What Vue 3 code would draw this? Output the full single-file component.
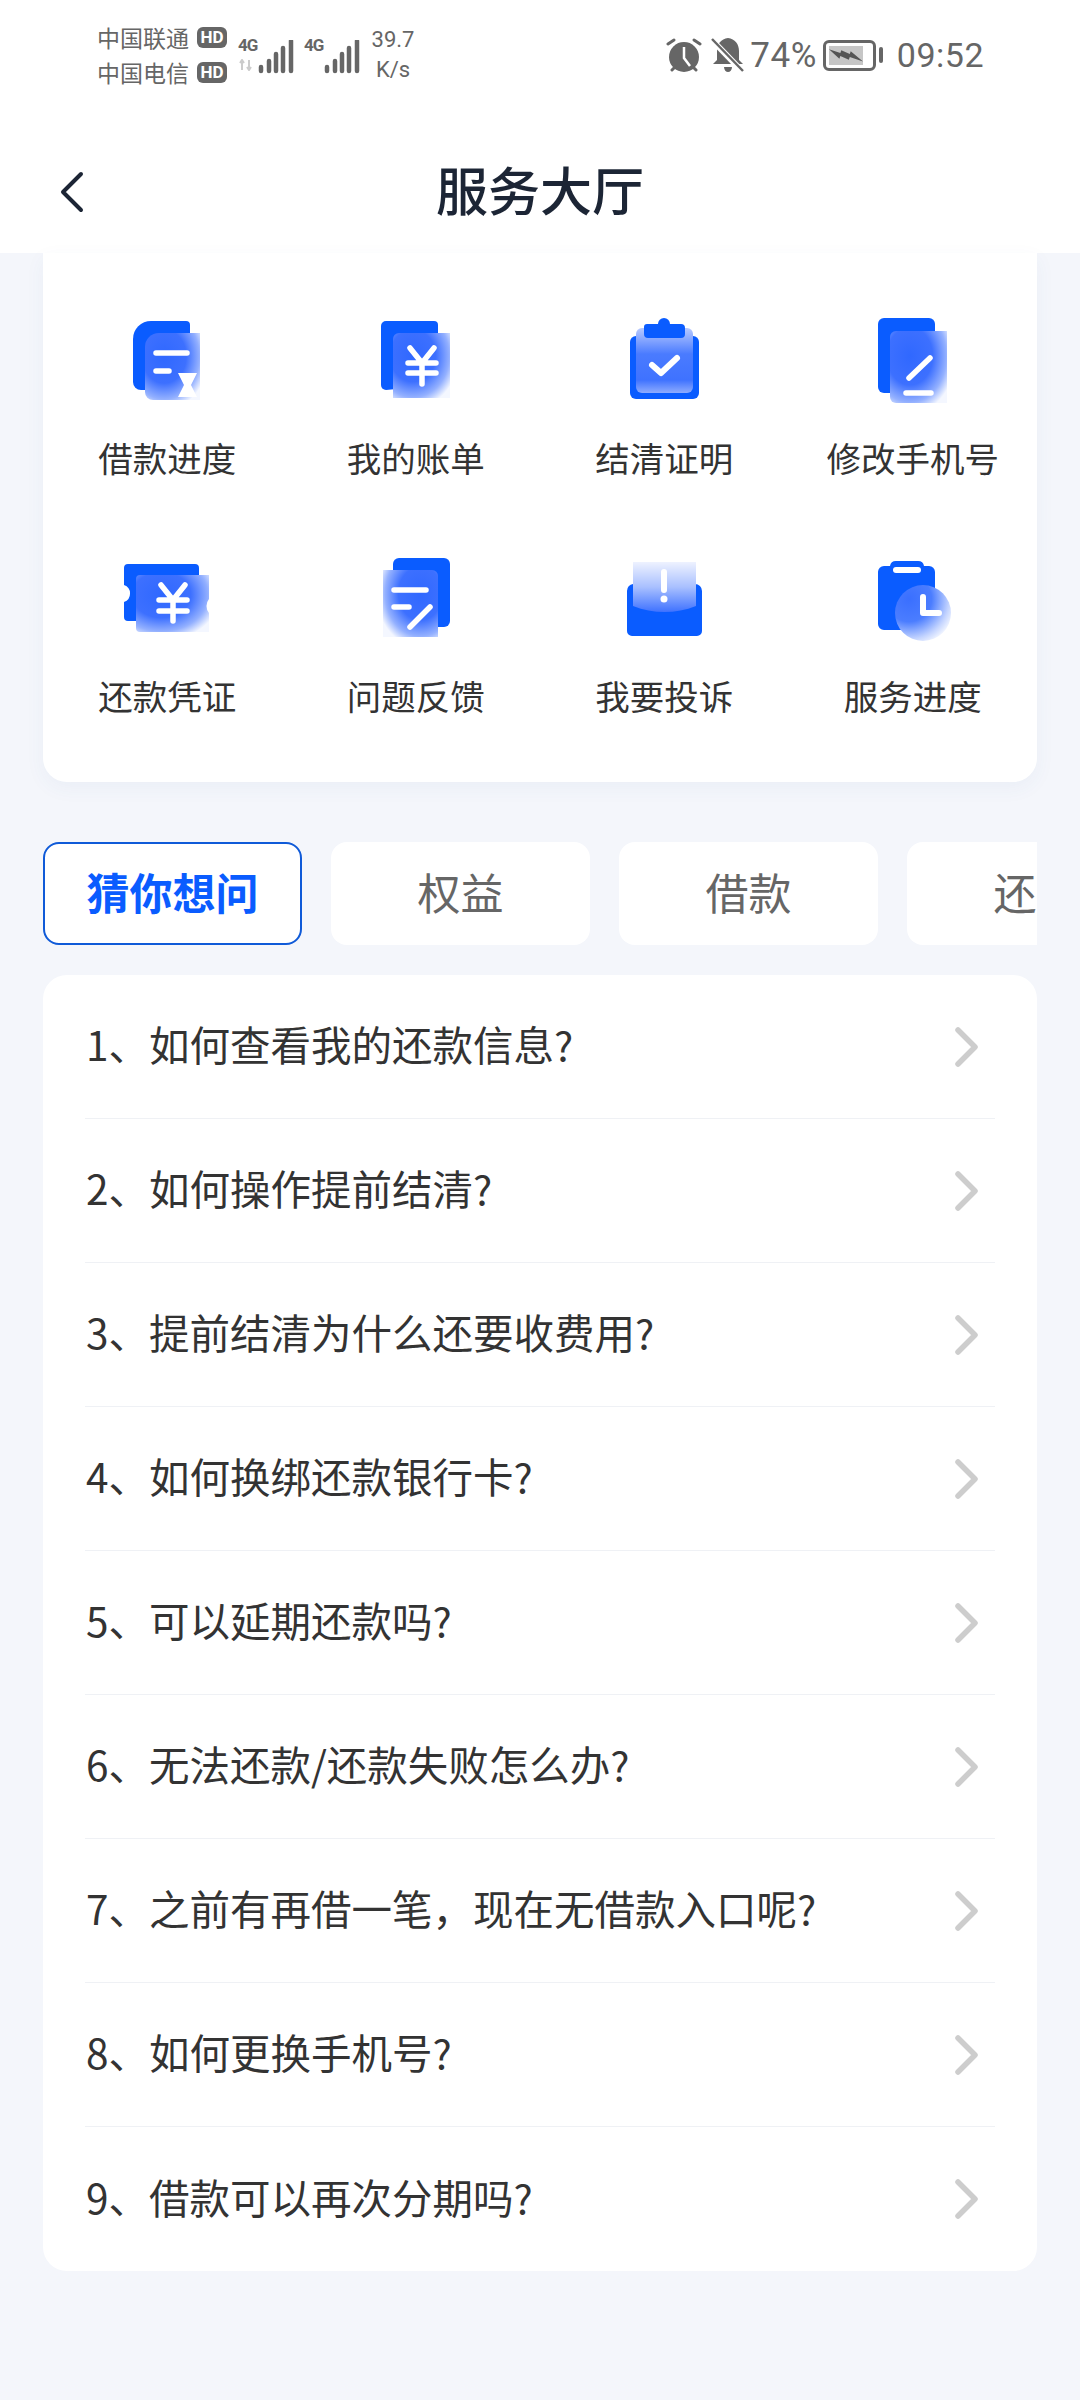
<script setup>
const tools = [
  { name: '借款进度', icon: 'progress' },
  { name: '我的账单', icon: 'bill' },
  { name: '结清证明', icon: 'proof' },
  { name: '修改手机号', icon: 'phone' },
  { name: '还款凭证', icon: 'ticket' },
  { name: '问题反馈', icon: 'feedback' },
  { name: '我要投诉', icon: 'complain' },
  { name: '服务进度', icon: 'clock' },
];

const tabs = ['猜你想问', '权益', '借款', '还款'];

const questions = [
  '1、如何查看我的还款信息?',
  '2、如何操作提前结清?',
  '3、提前结清为什么还要收费用?',
  '4、如何换绑还款银行卡?',
  '5、可以延期还款吗?',
  '6、无法还款/还款失败怎么办?',
  '7、之前有再借一笔，现在无借款入口呢?',
  '8、如何更换手机号?',
  '9、借款可以再次分期吗?',
];
</script>

<template>
  <div class="page">
    <svg class="defs" width="0" height="0" aria-hidden="true">
      <defs>
        <radialGradient id="glass" cx="0.35" cy="0.35" r="0.8">
          <stop offset="0" stop-color="#3068ff" />
          <stop offset="0.5" stop-color="#3d70ff" />
          <stop offset="0.8" stop-color="#93b0ff" />
          <stop offset="1" stop-color="#f4f7ff" />
        </radialGradient>
        <radialGradient id="glassFlip" cx="0.68" cy="0.35" r="0.8">
          <stop offset="0" stop-color="#3068ff" />
          <stop offset="0.5" stop-color="#3d70ff" />
          <stop offset="0.8" stop-color="#93b0ff" />
          <stop offset="1" stop-color="#f4f7ff" />
        </radialGradient>
        <radialGradient id="glassRound" cx="0.25" cy="0.25" r="0.9">
          <stop offset="0" stop-color="#3a6fff" />
          <stop offset="0.45" stop-color="#4b7dff" />
          <stop offset="0.8" stop-color="#c5d5ff" />
          <stop offset="1" stop-color="#ffffff" />
        </radialGradient>
        <linearGradient id="paper" x1="0" y1="0" x2="0" y2="1">
          <stop offset="0" stop-color="#eef2ff" />
          <stop offset="0.5" stop-color="#a9c0ff" />
          <stop offset="1" stop-color="#3f72ff" />
        </linearGradient>
        <linearGradient id="board" x1="0" y1="0" x2="0" y2="1">
          <stop offset="0" stop-color="#b8caff" />
          <stop offset="0.4" stop-color="#4a7bff" />
          <stop offset="0.8" stop-color="#3f72ff" />
          <stop offset="1" stop-color="#8eacff" />
        </linearGradient>
      </defs>
    </svg>

    <header class="top">
      <div class="status">
        <div class="carriers">
          <div class="carrier">中国联通<span class="hd">HD</span></div>
          <div class="carrier">中国电信<span class="hd">HD</span></div>
        </div>
        <div class="signal">
          <span class="gen">4G</span>
          <svg class="arrows" width="14" height="12" viewBox="0 0 14 12"><path d="M3 11V2M1 4l2-3 2 3M10 1v9M8 8l2 3 2-3" fill="none" stroke="#ccc" stroke-width="2" /></svg>
          <svg class="bars" width="36" height="34" viewBox="0 0 36 34">
            <path d="M3 27v4M11 21v10M18 14v17M25 8v23M33 1v30" stroke="#666" stroke-width="4.5" stroke-linecap="round" />
          </svg>
        </div>
        <div class="signal second">
          <span class="gen">4G</span>
          <svg class="bars" width="36" height="34" viewBox="0 0 36 34">
            <path d="M3 27v4M11 21v10M18 14v17M25 8v23M33 1v30" stroke="#666" stroke-width="4.5" stroke-linecap="round" />
          </svg>
        </div>
        <div class="speed">39.7<br />K/s</div>
        <div class="spacer"></div>
        <svg class="alarm" width="36" height="36" viewBox="0 0 36 36">
          <circle cx="18" cy="20" r="15" fill="#666" />
          <path d="M2 7l6-4M34 7l-6-4M6 33l3-3M30 33l-3-3" stroke="#666" stroke-width="3" stroke-linecap="round" />
          <path d="M18 10v11l6 8" fill="none" stroke="#fff" stroke-width="2.5" />
        </svg>
        <svg class="mute" width="34" height="36" viewBox="0 0 34 36">
          <path d="M17 1c7 1 11 6 11 13v9l4 4H2l4-4v-9c0-7 4-12 11-13z" fill="#666" />
          <path d="M13 30h8c0 3-2 5-4 5s-4-2-4-5z" fill="#666" />
          <path d="M1 3l30 31" stroke="#fff" stroke-width="6" />
          <path d="M1 2l31 32" stroke="#666" stroke-width="2.5" />
        </svg>
        <span class="pct">74%</span>
        <div class="battery">
          <div class="cell">
            <div class="level">
              <svg width="36" height="16" viewBox="0 0 36 16"><path d="M0 2l12 4 1-3 9 4 1-3 13 11-14-5-1 3-9-4-1 3z" fill="#555" /></svg>
            </div>
          </div>
          <div class="tip"></div>
        </div>
        <span class="time">09:52</span>
      </div>
      <div class="nav">
        <svg class="back" width="26" height="42" viewBox="0 0 26 42"><path d="M22 3L4 21l18 18" fill="none" stroke="#1c2535" stroke-width="4" stroke-linecap="round" stroke-linejoin="round" /></svg>
        <h1 class="title">服务大厅</h1>
      </div>
    </header>

    <section class="card tools">
      <div v-for="tool in tools" :key="tool.name" class="tool">
        <svg class="tool-icon" width="100" height="100" viewBox="0 0 100 100">
          <template v-if="tool.icon === 'progress'">
            <path d="M34 11h35a4 4 0 0 1 4 4v65H24a8 8 0 0 1-8-8V29a18 18 0 0 1 18-18z" fill="#0a5cff" />
            <path d="M42 23h41v67H36a8 8 0 0 1-8-8V37a14 14 0 0 1 14-14z" fill="url(#glass)" />
            <path d="M39 43h31M39 61h13" stroke="#fff" stroke-width="5.5" stroke-linecap="round" />
            <path d="M61 63h19l-6 12 6 12H61l6-12z" fill="#fff" />
          </template>
          <template v-else-if="tool.icon === 'bill'">
            <path d="M20 11h48a4 4 0 0 1 4 4v60l-52 5a5 5 0 0 1-5-5V16a5 5 0 0 1 5-5z" fill="#0a5cff" />
            <path d="M33 23h51v65H27V29a6 6 0 0 1 6-6z" fill="url(#glass)" />
            <path d="M44 38l12 15 12-15M42 53h28M42 63h28M56 53v21" fill="none" stroke="#fff" stroke-width="5.5" stroke-linecap="round" stroke-linejoin="round" />
          </template>
          <template v-else-if="tool.icon === 'proof'">
            <rect x="16" y="26" width="69" height="63" rx="6" fill="#0a5cff" />
            <path d="M28 18h45a6 6 0 0 1 6 6v53a6 6 0 0 1-6 6H28a6 6 0 0 1-6-6V24a6 6 0 0 1 6-6z" fill="url(#board)" />
            <path d="M33 14h11a6 6 0 0 1 12 0h11a4 4 0 0 1 4 4v6a4 4 0 0 1-4 4H34a4 4 0 0 1-4-4v-7a3 3 0 0 1 3-3z" fill="#0a5cff" />
            <path d="M38 55l9 8 16-15" fill="none" stroke="#fff" stroke-width="6" stroke-linecap="round" stroke-linejoin="round" />
          </template>
          <template v-else-if="tool.icon === 'phone'">
            <rect x="15" y="8" width="57" height="75" rx="6" fill="#0a5cff" />
            <path d="M33 21h51v72H33a6 6 0 0 1-6-6V27a6 6 0 0 1 6-6z" fill="url(#glass)" />
            <path d="M46 68l21-20" stroke="#fff" stroke-width="5.5" stroke-linecap="round" />
            <path d="M43 83h25" stroke="#fff" stroke-width="5.5" stroke-linecap="round" />
          </template>
          <template v-else-if="tool.icon === 'ticket'">
            <path d="M11 16h67a4 4 0 0 1 4 4v53H11a4 4 0 0 1-4-4V54a9 9 0 0 0 0-17V20a4 4 0 0 1 4-4z" fill="#0a5cff" />
            <path d="M23 27h69v24a11 11 0 0 0 0 14v19H23a4 4 0 0 1-4-4V31a4 4 0 0 1 4-4z" fill="url(#glass)" />
            <path d="M44 37l12 15 12-15M42 52h28M42 63h28M56 52v21" fill="none" stroke="#fff" stroke-width="5.5" stroke-linecap="round" stroke-linejoin="round" />
          </template>
          <template v-else-if="tool.icon === 'feedback'">
            <path d="M33 10h45a6 6 0 0 1 6 6v57a6 6 0 0 1-6 6H27V16a6 6 0 0 1 6-6z" fill="#0a5cff" />
            <path d="M17 22h49a6 6 0 0 1 6 6v61H17z" fill="url(#glassFlip)" />
            <path d="M28 42h32M28 59h15" stroke="#fff" stroke-width="5.5" stroke-linecap="round" />
            <path d="M44 79l20-20" stroke="#fff" stroke-width="5.5" stroke-linecap="round" />
          </template>
          <template v-else-if="tool.icon === 'complain'">
            <path d="M19 36h62a7 7 0 0 1 7 7v40a5 5 0 0 1-5 5H18a5 5 0 0 1-5-5V43a7 7 0 0 1 6-7z" fill="#0a5cff" />
            <path d="M19 14h63v44c-20 8-43 8-63 0z" fill="url(#paper)" />
            <path d="M50 24v18" stroke="#fff" stroke-width="6" stroke-linecap="round" />
            <circle cx="50" cy="51" r="3.5" fill="#fff" />
          </template>
          <template v-else-if="tool.icon === 'clock'">
            <path d="M21 18h6a6 6 0 0 1 6-5h22a6 6 0 0 1 6 5h5a6 6 0 0 1 6 6v52a6 6 0 0 1-6 6H21a6 6 0 0 1-6-6V24a6 6 0 0 1 6-6z" fill="#0a5cff" />
            <path d="M33 22h22" stroke="#fff" stroke-width="6" stroke-linecap="round" />
            <circle cx="60" cy="65" r="28" fill="url(#glassRound)" />
            <path d="M60 49v16h16" fill="none" stroke="#fff" stroke-width="6" stroke-linecap="round" stroke-linejoin="round" />
          </template>
        </svg>
        <div class="tool-name">{{ tool.name }}</div>
      </div>
    </section>

    <div class="tabs">
      <div v-for="(tab, i) in tabs" :key="tab" class="tab" :class="{ active: i === 0 }">{{ tab }}</div>
    </div>

    <section class="card faq">
      <div v-for="q in questions" :key="q" class="row">
        <span class="q">{{ q }}</span>
        <svg class="arrow" width="26" height="40" viewBox="0 0 26 40"><path d="M4 3l17 17L4 37" fill="none" stroke="#cdcdcd" stroke-width="5.5" stroke-linecap="round" stroke-linejoin="round" /></svg>
      </div>
    </section>
  </div>
</template>

<style scoped>
.page {
  min-height: 2400px;
  background: #f4f6fb;
  font-family: "Noto Sans CJK SC", "Noto Sans", sans-serif;
  overflow: hidden;
}

.defs {
  position: absolute;
}

.top {
  background: #fff;
  height: 253px;
}

.status {
  height: 110px;
  display: flex;
  align-items: center;
  padding: 0 96px 0 97px;
  color: #666;
}

.carriers {
  width: 132px;
  margin-right: 9px;
}

.carrier {
  display: flex;
  align-items: center;
  height: 35px;
  font-size: 23px;
  line-height: 35px;
}

.hd {
  margin-left: 8px;
  width: 30px;
  height: 21px;
  background: #666;
  border-radius: 6px;
  color: #fff;
  font-family: "Roboto", sans-serif;
  font-weight: 700;
  font-size: 17px;
  line-height: 21px;
  text-align: center;
}

.signal {
  position: relative;
  display: flex;
  align-items: flex-end;
  width: 56px;
  height: 36px;
  margin-top: 2px;
  margin-right: 10px;
}

.gen {
  position: absolute;
  left: 0;
  top: -2px;
  font-family: "Roboto", sans-serif;
  font-weight: 700;
  font-size: 17px;
  line-height: 19px;
  letter-spacing: -1px;
}

.arrows {
  position: absolute;
  left: 1px;
  top: 21px;
}

.bars {
  position: absolute;
  right: 0;
  bottom: 0;
}

.second {
  margin-right: 10px;
}

.speed {
  font-family: "Roboto", sans-serif;
  font-size: 22px;
  line-height: 30px;
  text-align: center;
  width: 46px;
}

.spacer {
  flex: 1;
}

.alarm {
  margin-right: 9px;
}

.mute {
  margin-right: 5px;
}

.pct,
.time {
  font-family: "Roboto", sans-serif;
  font-weight: 400;
  font-size: 34px;
  letter-spacing: 0.5px;
}

.pct {
  font-size: 35px;
  margin-right: 6px;
}

.battery {
  display: flex;
  align-items: center;
  margin-right: 14px;
}

.cell {
  width: 53px;
  height: 31px;
  border: 3px solid #666;
  border-radius: 6px;
  padding: 3px;
  box-sizing: border-box;
}

.level {
  width: 34px;
  height: 19px;
  background: #c6c6c6;
  display: flex;
  align-items: center;
}

.tip {
  width: 4px;
  height: 16px;
  margin-left: 3px;
  background: #666;
  border-radius: 2px;
}

.nav {
  position: relative;
  height: 143px;
  padding-top: 19px;
  box-sizing: border-box;
  display: flex;
  align-items: center;
  justify-content: center;
}

.back {
  position: absolute;
  left: 59px;
  top: 61px;
}

.title {
  margin: 0 0 4px;
  color: #1c2535;
  font-size: 52px;
  font-weight: 500;
  line-height: 70px;
}

.card {
  margin: 0 43px;
  background: #fff;
  border-radius: 24px;
}

.tools {
  display: grid;
  grid-template-columns: repeat(4, 1fr);
  row-gap: 66px;
  padding: 57px 0 62px;
  border-radius: 0 0 24px 24px;
  box-shadow: 0 6px 20px rgba(60, 90, 150, 0.05);
}

.tool {
  display: flex;
  flex-direction: column;
  align-items: center;
}

.tool-name {
  margin-top: 22px;
  font-size: 34.5px;
  line-height: 50px;
  color: #333;
  white-space: nowrap;
}

.tabs {
  display: flex;
  gap: 29px;
  margin: 60px 43px 30px;
  overflow: hidden;
}

.tab {
  flex: 0 0 259px;
  height: 103px;
  box-sizing: border-box;
  background: #fff;
  border-radius: 16px;
  color: #666;
  font-size: 43px;
  line-height: 98px;
  text-align: center;
}

.tab.active {
  border: 2px solid #0f5ad8;
  color: #0a5cff;
  font-weight: 700;
  line-height: 94px;
}

.faq {
  padding: 0 42px;
}

.row {
  display: flex;
  align-items: center;
  justify-content: space-between;
  height: 144px;
  box-sizing: border-box;
  border-bottom: 1px solid #eff1f5;
}

.row:last-child {
  border-bottom: 0;
}

.q {
  margin-left: 1px;
  padding-bottom: 5px;
  font-size: 40.5px;
  line-height: 60px;
  color: #333;
}

.arrow {
  margin-right: 15px;
}
</style>

<style>
html,
body {
  margin: 0;
  background: #f4f6fb;
}
</style>
